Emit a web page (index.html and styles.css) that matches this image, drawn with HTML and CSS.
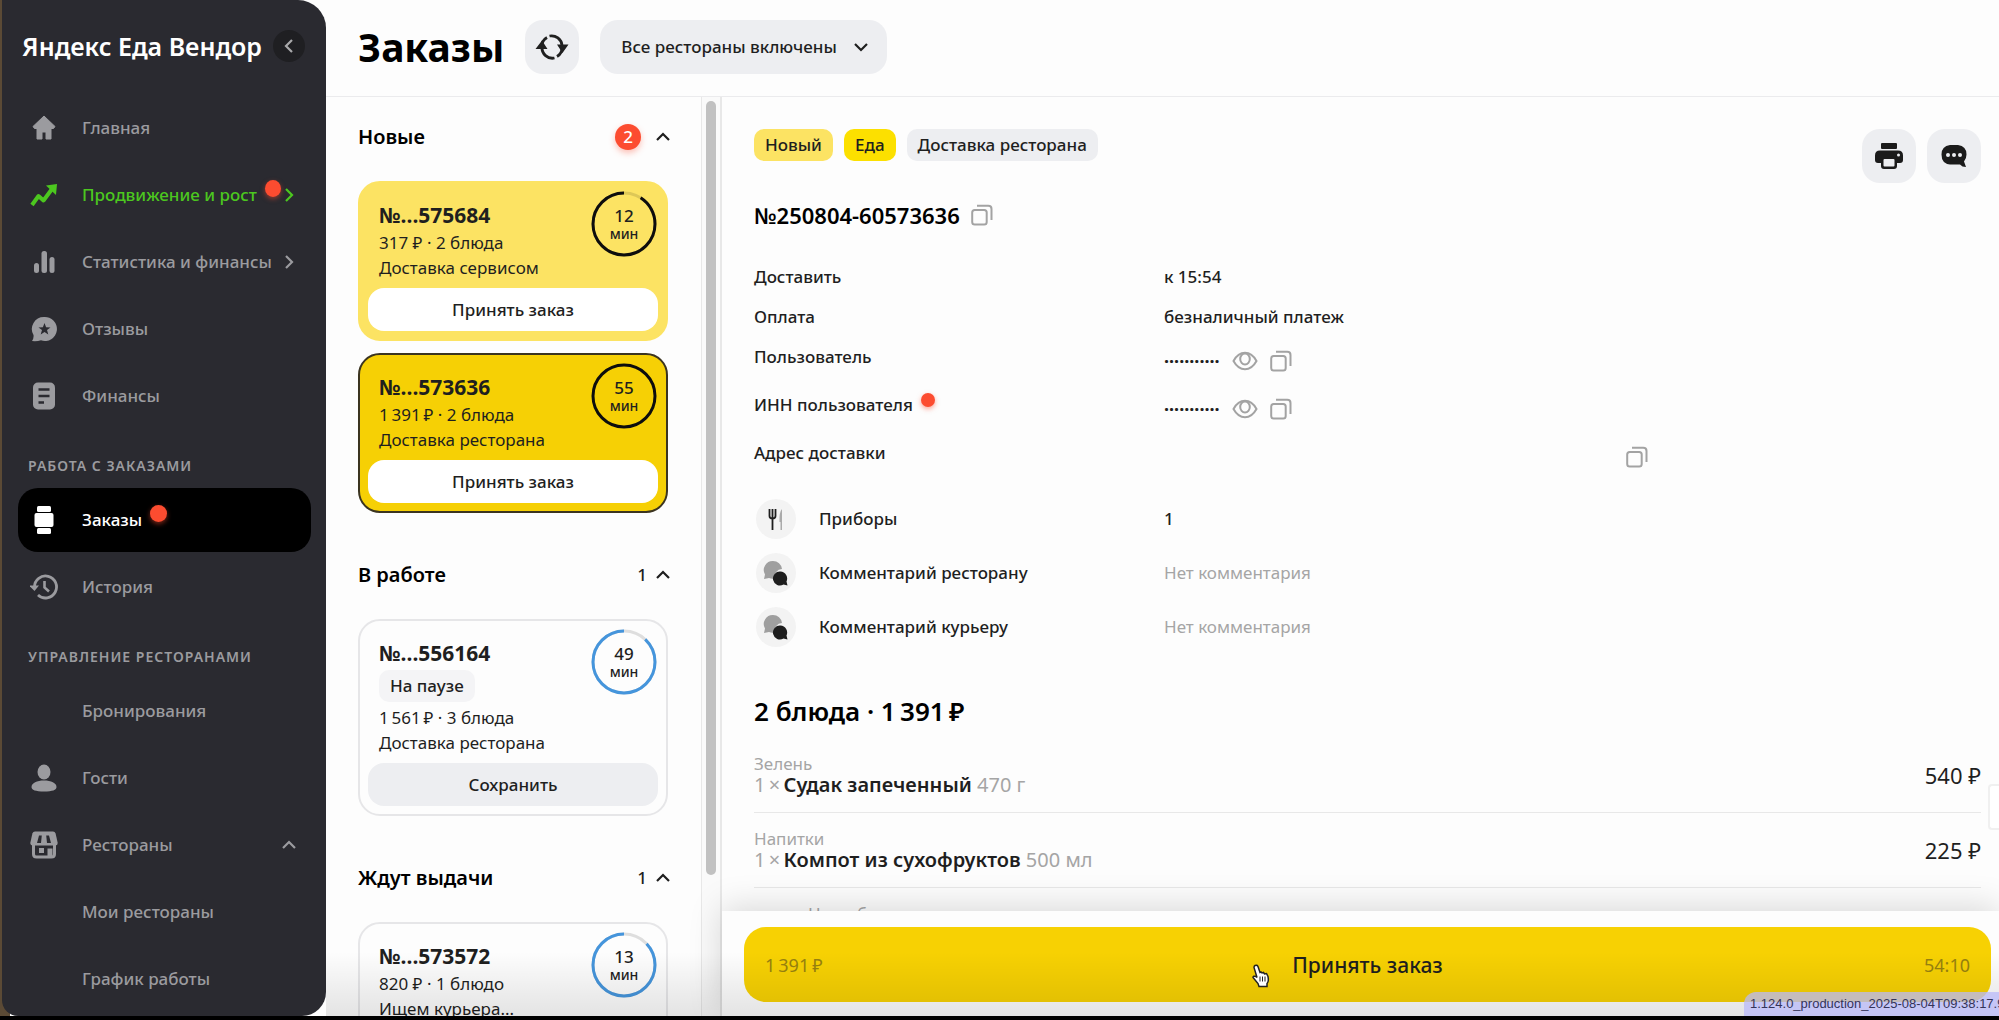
FILE: index.html
```html
<!DOCTYPE html>
<html lang="ru">
<head>
  <meta charset="UTF-8" />
  <meta name="viewport" content="width=device-width, initial-scale=1.0"/>
  <title>Заказы — Яндекс Еда Вендор</title>
  <link rel="stylesheet" href="styles.css">
</head>
<body>
  <!-- Общие иконки -->
  <svg class="sprite" aria-hidden="true">
    <symbol id="chevron" viewBox="0 0 16 16"><path d="M2 11l6-6 6 6" fill="none" stroke="currentColor" stroke-width="2.2"/></symbol>
    <symbol id="copy" viewBox="0 0 22 22"><rect x="1.2" y="6" width="14.5" height="14.5" rx="2.5" fill="none" stroke="currentColor" stroke-width="2"/><path d="M6 1.7h11.3q3.2 0 3.2 3.2V16" fill="none" stroke="currentColor" stroke-width="2"/></symbol>
    <symbol id="eye" viewBox="0 0 26 20"><path d="M1.5 10Q6 1.8 13 1.8T24.5 10Q20 18.2 13 18.2T1.5 10z" fill="none" stroke="currentColor" stroke-width="2"/><ellipse cx="13" cy="8" rx="4.8" ry="5.4" fill="none" stroke="currentColor" stroke-width="2"/></symbol>
    <symbol id="comments" viewBox="0 0 26 26"><path d="M10 1a9 9 0 0 0-8 13.5L1 19l5-1a9 9 0 0 0 6 .5A7.5 7.5 0 0 1 19 9 9 9 0 0 0 10 1z" fill="#9f9f9f"/><path d="M17.5 11.5a7 7 0 1 0 3 13l4 1-1-4a7 7 0 0 0-6-10z" fill="#1e1e1e"/></symbol>
  </svg>

  <div class="app">
    <aside class="sidebar">
      <div class="brand">
        <span class="brand-name">Яндекс Еда Вендор</span>
        <button class="collapse" aria-label="Свернуть меню"><svg class="chev chev-left"><use href="#chevron"/></svg></button>
      </div>

      <nav class="menu">
        <a class="menu-item" href="#">
          <svg class="menu-icon" viewBox="0 0 28 28"><path d="M14 2L3 12.5l1.5 2H7V25h5v-7h4v7h5V14.500h2.500l1.500-2z" fill="currentColor" stroke="currentColor" stroke-width="1" stroke-linejoin="round"/></svg>
          Главная
        </a>
        <a class="menu-item green" href="#">
          <svg class="menu-icon" viewBox="0 0 28 28"><path d="M2 24l6.500-9 5 4.500L22 8" fill="none" stroke="currentColor" stroke-width="4" stroke-linejoin="round"/><path d="M16 4.500L27 3l-1 11z" fill="currentColor"/></svg>
          Продвижение и рост
          <span class="dot"></span>
          <svg class="chev chev-right"><use href="#chevron"/></svg>
        </a>
        <a class="menu-item" href="#">
          <svg class="menu-icon" viewBox="0 0 28 28"><g fill="currentColor"><rect x="4" y="15" width="5" height="10" rx="2.500"/><rect x="11.500" y="3" width="5.500" height="22" rx="2.500"/><rect x="19.500" y="9" width="5" height="16" rx="2.500"/></g></svg>
          Статистика и финансы
          <svg class="chev chev-right"><use href="#chevron"/></svg>
        </a>
        <a class="menu-item" href="#">
          <svg class="menu-icon" viewBox="0 0 28 28"><path d="M14 2a12 12 0 1 1-3 23.300Q7 26.500 2 26q2-3 1.500-6A12 12 0 0 1 14 2z" fill="currentColor"/><path d="M14.500 8l1.600 4.200 4.400.2-3.500 2.700 1.300 4.300-3.800-2.500-3.800 2.500 1.300-4.300-3.500-2.700 4.400-.2z" fill="#2a2a30"/></svg>
          Отзывы
        </a>
        <a class="menu-item" href="#">
          <svg class="menu-icon" viewBox="0 0 28 28"><rect x="3" y="0.500" width="22" height="27" rx="5" fill="currentColor"/><path d="M8.500 7.500h11M8.500 14h11M8.500 20.500h5.500" stroke="#2a2a30" stroke-width="2.600"/></svg>
          Финансы
        </a>

        <h2 class="menu-title">Работа с заказами</h2>
        <a class="menu-item active" href="#">
          <svg class="menu-icon" viewBox="0 0 28 28"><g fill="currentColor"><rect x="7" y="0" width="14" height="6" rx="1.500"/><rect x="4.500" y="7" width="19" height="14" rx="2"/><rect x="7" y="22" width="14" height="6" rx="1.500"/></g></svg>
          Заказы
          <span class="dot"></span>
        </a>
        <a class="menu-item" href="#">
          <svg class="menu-icon" viewBox="0 0 28 28"><path d="M4.500 14A11 11 0 1 1 8 22" fill="none" stroke="currentColor" stroke-width="2.800"/><path d="M-1 12.500h10L4.500 18z" fill="currentColor"/><path d="M14.500 8v6.500l4.500 4" fill="none" stroke="currentColor" stroke-width="2.600"/></svg>
          История
        </a>

        <h2 class="menu-title">Управление ресторанами</h2>
        <a class="menu-item nested" href="#">Бронирования</a>
        <a class="menu-item" href="#">
          <svg class="menu-icon" viewBox="0 0 28 28"><g fill="currentColor"><ellipse cx="14" cy="8" rx="6.500" ry="7.500"/><path d="M14 16.500c7 0 12.500 2.500 12.500 6.500 0 3-4 4.500-12.500 4.500S1.500 26 1.500 23c0-4 5.500-6.500 12.500-6.500z"/></g></svg>
          Гости
        </a>
        <a class="menu-item" href="#">
          <svg class="menu-icon" viewBox="0 0 28 28"><path d="M5 .5h18q2 0 2.600 2l2 9q.4 3-2.600 3H3q-3 0-2.600-3l2-9Q3 .5 5 .5z" fill="currentColor"/><path d="M9 4.500h2.800l-.8 7.500H7zM16.200 4.500H19l2 7.500h-4z" fill="#2a2a30"/><path d="M3.500 14v9q0 3 3 3h15q3 0 3-3v-9" fill="none" stroke="currentColor" stroke-width="3"/><rect x="9" y="17" width="5" height="5" fill="currentColor"/><path d="M17.500 17.500h5V26h-5z" fill="currentColor"/></svg>
          Рестораны
          <svg class="chev"><use href="#chevron"/></svg>
        </a>
        <a class="menu-item nested" href="#">Мои рестораны</a>
        <a class="menu-item nested" href="#">График работы</a>
      </nav>
    </aside>

    <div class="page">
      <header class="topbar">
        <h1>Заказы</h1>
        <button class="icon-button" aria-label="Обновить">
          <svg width="34" height="28" viewBox="0 0 34 28"><path d="M7 15a10 10 0 0 1 5-10.500M14.500 3A10.500 10.500 0 0 1 27 12.500M27 14.500a10 10 0 0 1-5 9M19.500 25A10.500 10.500 0 0 1 7 14" fill="none" stroke="#202020" stroke-width="2.800"/><path d="M7 7.500l5.500 8.500h-12zM27.500 20L22 11.500h11.500z" fill="#202020"/></svg>
        </button>
        <div class="select-box">
          <select class="select" aria-label="Рестораны">
            <option>Все рестораны включены</option>
          </select>
          <svg class="chev chev-down"><use href="#chevron"/></svg>
        </div>
      </header>

      <div class="columns">
        <!-- Список заказов -->
        <section class="orders">
          <div class="group">
            <div class="group-head">
              <h2>Новые</h2>
              <span class="badge">2</span>
              <svg class="chev"><use href="#chevron"/></svg>
            </div>
            <article class="card new">
              <div class="card-body">
                <h3>№...575684</h3>
                <p>317 ₽ · 2 блюда</p>
                <p>Доставка сервисом</p>
                <div class="timer">
                  <svg class="ring" viewBox="0 0 66 66"><circle class="ring-bg" cx="33" cy="33" r="31"/><circle class="ring-fg" cx="33" cy="33" r="31" pathLength="100" stroke-dasharray="91 100" stroke-dashoffset="-9"/></svg>
                  <b>12</b><span>мин</span>
                </div>
              </div>
              <button class="card-button">Принять заказ</button>
            </article>
            <article class="card selected">
              <div class="card-body">
                <h3>№...573636</h3>
                <p>1&thinsp;391&thinsp;₽ · 2 блюда</p>
                <p>Доставка ресторана</p>
                <div class="timer">
                  <svg class="ring" viewBox="0 0 66 66"><circle class="ring-fg" cx="33" cy="33" r="31"/></svg>
                  <b>55</b><span>мин</span>
                </div>
              </div>
              <button class="card-button">Принять заказ</button>
            </article>
          </div>

          <div class="group">
            <div class="group-head">
              <h2>В работе</h2>
              <span class="count">1</span>
              <svg class="chev"><use href="#chevron"/></svg>
            </div>
            <article class="card work">
              <div class="card-body">
                <h3>№...556164</h3>
                <span class="pause">На паузе</span>
                <p>1&thinsp;561&thinsp;₽ · 3 блюда</p>
                <p>Доставка ресторана</p>
                <div class="timer">
                  <svg class="ring" viewBox="0 0 66 66"><circle class="ring-bg" cx="33" cy="33" r="31"/><circle class="ring-fg" cx="33" cy="33" r="31" pathLength="100" stroke-dasharray="88 100" stroke-dashoffset="-12"/></svg>
                  <b>49</b><span>мин</span>
                </div>
              </div>
              <button class="card-button">Сохранить</button>
            </article>
          </div>

          <div class="group">
            <div class="group-head">
              <h2>Ждут выдачи</h2>
              <span class="count">1</span>
              <svg class="chev"><use href="#chevron"/></svg>
            </div>
            <article class="card work">
              <div class="card-body">
                <h3>№...573572</h3>
                <p>820 ₽ · 1 блюдо</p>
                <p>Ищем курьера...</p>
                <div class="timer">
                  <svg class="ring" viewBox="0 0 66 66"><circle class="ring-bg" cx="33" cy="33" r="31"/><circle class="ring-fg" cx="33" cy="33" r="31" pathLength="100" stroke-dasharray="87 100" stroke-dashoffset="-13"/></svg>
                  <b>13</b><span>мин</span>
                </div>
              </div>
            </article>
          </div>
        </section>
        <div class="scrollbar"><div class="thumb"></div></div>

        <!-- Карточка выбранного заказа -->
        <main class="detail">
          <div class="detail-scroll">
            <div class="detail-top">
              <div class="tags">
                <span class="tag light">Новый</span>
                <span class="tag yellow">Еда</span>
                <span class="tag">Доставка ресторана</span>
              </div>
              <div class="actions">
                <button class="icon-button" aria-label="Печать">
                  <svg width="28" height="26" viewBox="0 0 28 26"><g fill="#1b1b1b"><rect x="6" y="0" width="16" height="6" rx="1"/><path d="M5 7.500h18q5 0 5 5V17q0 3-3 3h-3v3q0 3-3 3H9q-3 0-3-3v-3H3q-3 0-3-3v-4.500q0-5 5-5z"/></g><rect x="8.500" y="16" width="11" height="7.500" rx="1" fill="#edeef1"/><circle cx="23.500" cy="12" r="1.500" fill="#edeef1"/></svg>
                </button>
                <button class="icon-button" aria-label="Чат">
                  <svg width="26" height="24" viewBox="0 0 26 24"><path d="M9 1h8q8.500 1 8.500 9.500 0 4-2.500 7l2 5.500q-4 0-6-2.500H9Q.5 19.500.5 10.500.5 2 9 1z" fill="#1b1b1b"/><g fill="#edeef1"><circle cx="7" cy="11" r="2"/><circle cx="13" cy="11" r="2"/><circle cx="19" cy="11" r="2"/></g></svg>
                </button>
              </div>
            </div>

            <div class="number">
              <h2>№250804-60573636</h2>
              <button class="plain" aria-label="Копировать номер"><svg class="copy"><use href="#copy"/></svg></button>
            </div>

            <dl class="info">
              <div class="row"><dt>Доставить</dt><dd>к 15:54</dd></div>
              <div class="row"><dt>Оплата</dt><dd>безналичный платеж</dd></div>
              <div class="row">
                <dt>Пользователь</dt>
                <dd>
                  <span class="secret">···········</span>
                  <button class="plain" aria-label="Показать"><svg class="eye"><use href="#eye"/></svg></button>
                  <button class="plain" aria-label="Копировать"><svg class="copy"><use href="#copy"/></svg></button>
                </dd>
              </div>
              <div class="row tall">
                <dt>ИНН пользователя <span class="dot small"></span></dt>
                <dd>
                  <span class="secret">···········</span>
                  <button class="plain" aria-label="Показать"><svg class="eye"><use href="#eye"/></svg></button>
                  <button class="plain" aria-label="Копировать"><svg class="copy"><use href="#copy"/></svg></button>
                </dd>
              </div>
              <div class="row tall">
                <dt>Адрес доставки</dt>
                <dd class="address"><button class="plain" aria-label="Копировать адрес"><svg class="copy"><use href="#copy"/></svg></button></dd>
              </div>
            </dl>

            <dl class="notes">
              <div class="note">
                <dt><span class="round"><svg width="16" height="24" viewBox="0 0 16 24"><path d="M1.500 2v7q0 2.500 3 2.500t3-2.500V2M4.500 2v21" fill="none" stroke="#1e1e1e" stroke-width="1.800"/><path d="M14 2v21h-1.500v-8h-1Q11 5 14 2z" fill="#aaa"/></svg></span>Приборы</dt>
                <dd>1</dd>
              </div>
              <div class="note">
                <dt><span class="round"><svg width="26" height="26"><use href="#comments"/></svg></span>Комментарий ресторану</dt>
                <dd class="muted">Нет комментария</dd>
              </div>
              <div class="note">
                <dt><span class="round"><svg width="26" height="26"><use href="#comments"/></svg></span>Комментарий курьеру</dt>
                <dd class="muted">Нет комментария</dd>
              </div>
            </dl>

            <h2 class="total">2 блюда · 1&thinsp;391&thinsp;₽</h2>
            <ul class="dishes">
              <li class="dish">
                <div>
                  <div class="category">Зелень</div>
                  <div class="dish-name">1&thinsp;×&thinsp;<b>Судак запеченный</b> 470 г</div>
                </div>
                <span class="price">540 ₽</span>
              </li>
              <li class="dish">
                <div>
                  <div class="category">Напитки</div>
                  <div class="dish-name">1&thinsp;×&thinsp;<b>Компот из сухофруктов</b> 500 мл</div>
                </div>
                <span class="price">225 ₽</span>
              </li>
              <li class="dish option">
                <div class="category">На выбор</div>
              </li>
            </ul>
          </div>

          <footer class="accept-bar">
            <button class="accept">
              <span class="side">1&thinsp;391&thinsp;₽</span>
              <span class="accept-text">Принять заказ</span>
              <span class="side right">54:10</span>
            </button>
          </footer>
        </main>
      </div>

      <div class="shade"></div>
      <div class="widget"></div>
      <div class="version">1.124.0_production_2025-08-04T09:38:17.9</div>
    </div>
  </div>

  <!-- Курсор -->
  <svg class="cursor" viewBox="0 0 20 24"><path d="M5 2q2-1 3 1l2 6 1-.5 1 1 1.500-.5 1 1.500 2-.5 1.500 3q1 5-1 7v3h-8l-1-3-5-6q0-2 3-1l1 1L4 4q0-1.500 1-2z" fill="#fff" stroke="#222" stroke-width="1.500"/><path d="M10 13v5M12.500 13v5M15 13v5" stroke="#222"/></svg>
</body>
</html>
```
FILE: styles.css
```css
* { box-sizing: border-box; margin: 0; padding: 0; }

body {
  font-family: "Noto Sans", "Open Sans", sans-serif;
  font-size: 17px;
  font-weight: 500;
  line-height: 24px;
  color: #1f1f1f;
  background: #000;
  height: 100vh;
  overflow: hidden;
}

a { color: inherit; text-decoration: none; }
ul { list-style: none; }
button, select { font: inherit; color: inherit; border: none; cursor: pointer; }

.sprite {
  position: absolute;
  width: 0;
  height: 0;
}

.app {
  display: flex;
  height: calc(100vh - 4px);
  background: linear-gradient(90deg, #5b4a35 10px, #fdfdfd 10px);
}

/* Стрелки */
.chev { width: 16px; height: 16px; flex: none; }
.chev-left { transform: rotate(-90deg); }
.chev-right { transform: rotate(90deg); }
.chev-down { transform: rotate(180deg); }

/* Боковое меню */
.sidebar {
  width: 324px;
  flex: none;
  margin-left: 2px;
  padding: 14px 15px 0 16px;
  background: #2a2a30;
  color: #9b9b9f;
  border-radius: 0 28px 24px 16px;
  overflow: hidden;
}

.brand {
  display: flex;
  align-items: center;
  justify-content: space-between;
  height: 64px;
  padding: 0 6px 0 4px;
  margin-bottom: 18px;
}

.brand-name {
  font-size: 25px;
  font-weight: 600;
  color: #fff;
  white-space: nowrap;
}

.collapse {
  display: flex;
  align-items: center;
  justify-content: center;
  width: 32px;
  height: 32px;
  border-radius: 50%;
  background: #1f1f22;
  color: #a9a9ab;
}

.menu {
  display: flex;
  flex-direction: column;
  gap: 3px;
}

.menu-item {
  display: flex;
  align-items: center;
  height: 64px;
  padding: 0 14px 0 12px;
  border-radius: 20px;
  white-space: nowrap;
}

.menu-item .chev { margin-left: auto; }
.menu-icon { width: 28px; height: 28px; margin-right: 24px; flex: none; }
.nested { padding-left: 64px; }
.green { color: #4cc71f; }
.active { background: #000; color: #fff; }

.menu-title {
  height: 54px;
  padding: 23px 10px 0;
  font-size: 14px;
  font-weight: 600;
  letter-spacing: 1px;
  text-transform: uppercase;
}

.dot {
  width: 17px;
  height: 17px;
  margin: 0 0 14px 8px;
  border-radius: 50%;
  background: #fc4c30;
  box-shadow: 0 2px 5px rgba(252, 76, 48, 0.5);
}

.dot.small { width: 14px; height: 14px; margin-bottom: 12px; }

/* Шапка */
.page {
  position: relative;
  flex: 1;
  min-width: 0;
  display: flex;
  flex-direction: column;
}

.topbar {
  display: flex;
  align-items: center;
  gap: 21px;
  height: 97px;
  padding: 0 32px 3px;
  border-bottom: 1px solid #ebebed;
}

h1 {
  font-size: 39px;
  line-height: 48px;
  font-weight: 700;
  color: #000;
}

.icon-button {
  display: flex;
  align-items: center;
  justify-content: center;
  width: 54px;
  height: 54px;
  border-radius: 18px;
  background: #edeef1;
}

.select-box { position: relative; }

.select {
  appearance: none;
  height: 54px;
  padding: 0 50px 0 21px;
  border-radius: 18px;
  background: #edeef1;
}

.select-box .chev {
  position: absolute;
  right: 18px;
  top: 19px;
  pointer-events: none;
}

/* Список заказов */
.columns {
  display: flex;
  flex: 1;
  min-height: 0;
}

.orders {
  width: 375px;
  flex: none;
  padding: 18px 33px 0 32px;
  overflow: hidden;
}

.group { margin-bottom: 40px; }

.group-head {
  display: flex;
  align-items: center;
  height: 44px;
  margin-bottom: 22px;
}

.group-head h2 {
  flex: 1;
  font-size: 20px;
  font-weight: 600;
  color: #000;
}

.group-head .chev { margin-right: -3px; }
.count { margin-right: 8px; }

.badge {
  width: 26px;
  height: 26px;
  margin-right: 14px;
  border-radius: 50%;
  background: #fc4c30;
  box-shadow: 0 3px 6px rgba(252, 76, 48, 0.35);
  color: #fff;
  line-height: 26px;
  text-align: center;
}

.card {
  padding: 17px 8px 8px;
  border: 2px solid #e6e6e8;
  border-radius: 22px;
  margin-bottom: 12px;
}

.card.new { background: #fce363; border-color: #fce363; }
.card.selected { background: #f6d005; border-color: #3b3420; }

.card-body {
  position: relative;
  padding: 0 11px;
  margin-bottom: 8px;
}

.card h3 { font-size: 21px; line-height: 30px; font-weight: 700; }
.card p { line-height: 25px; font-weight: 400; }

.pause {
  display: table;
  margin: 2px 0 3px;
  padding: 4px 11px;
  border-radius: 10px;
  background: #f4f4f6;
}

.card-button {
  display: block;
  width: 100%;
  height: 43px;
  border-radius: 16px;
  background: #fff;
}

.work .card-button { background: #edeef1; }

.timer {
  position: absolute;
  top: -9px;
  right: 1px;
  width: 66px;
  height: 66px;
  padding-top: 15px;
  display: flex;
  flex-direction: column;
  align-items: center;
}

.timer b { font-size: 17px; font-weight: 500; line-height: 20px; }
.timer span { font-size: 14px; line-height: 16px; }

.ring {
  position: absolute;
  top: 0;
  left: 0;
  transform: rotate(-90deg);
}

.ring circle { fill: none; stroke-width: 3; }
.ring-bg { stroke: rgba(0, 0, 0, 0.12); }
.ring-fg { stroke: #0d0d0d; }
.work .ring-fg { stroke: #4595dc; }

.scrollbar {
  width: 21px;
  flex: none;
  padding: 4px;
  border-left: 1px solid #e8e8e8;
  border-right: 2px solid #e8e8e8;
  background: #fafafa;
}

.thumb {
  height: 85%;
  border-radius: 6px;
  background: #c1c1c1;
}

/* Детали заказа */
.detail {
  flex: 1;
  min-width: 0;
  display: flex;
  flex-direction: column;
}

.detail-scroll {
  flex: 1;
  min-height: 0;
  padding: 32px 18px 0 32px;
  overflow: hidden;
}

.detail-top { display: flex; justify-content: space-between; }
.tags, .actions { display: flex; gap: 11px; }

.tag {
  height: 32px;
  padding: 0 11px;
  border-radius: 10px;
  background: #edeef1;
  line-height: 32px;
}

.tag.light { background: #fce363; }
.tag.yellow { background: #fce000; }

.number {
  display: flex;
  align-items: center;
  gap: 11px;
  height: 28px;
  margin: 18px 0 36px;
}

.number h2 { font-size: 22px; font-weight: 600; color: #000; }

.plain {
  display: flex;
  background: none;
  color: #a3a3a3;
}

.copy { width: 22px; height: 22px; }
.eye { width: 26px; height: 20px; }

.row, .note { display: flex; }
.row { height: 40px; }
.row.tall { height: 48px; padding-top: 8px; }

dt { display: flex; width: 410px; }
dd { display: flex; }

.row dd { gap: 12px; height: 32px; }
.row dd .plain { align-items: center; }
.secret { font-size: 18px; font-weight: 700; line-height: 32px; }
.row dd.address { width: 484px; justify-content: flex-end; }

.notes { margin-top: 11px; }

.note { align-items: center; height: 54px; }
.note dt { align-items: center; }

.round {
  display: flex;
  align-items: center;
  justify-content: center;
  width: 40px;
  height: 40px;
  margin: 0 23px 0 2px;
  border-radius: 50%;
  background: #f3f3f3;
}

.muted { color: #a5a5a5; font-weight: 400; }

.total {
  margin-top: 39px;
  font-size: 26px;
  line-height: 36px;
  font-weight: 600;
  color: #000;
}

.dishes { margin-top: 9px; }

.dish {
  display: flex;
  align-items: center;
  justify-content: space-between;
  height: 75px;
  border-bottom: 1px solid #e8e8e8;
}

.dish.option { align-items: flex-start; padding: 16px 54px 0; }
.category { line-height: 20px; color: #a5a5a5; font-weight: 400; }
.dish-name { font-size: 20px; line-height: 22px; color: #a5a5a5; font-weight: 400; }
.dish-name b { color: #1f1f1f; font-weight: 600; }
.price { font-size: 22px; font-weight: 400; }

.accept-bar {
  padding: 16px 8px 14px 22px;
  background: #fdfdfd;
  box-shadow: 0 -4px 32px rgba(0, 0, 0, 0.15);
}

.accept {
  display: flex;
  align-items: center;
  width: 100%;
  height: 75px;
  padding: 0 21px;
  border-radius: 22px;
  background: #f7d103;
}

.accept-text { font-size: 21px; }
.side { flex: 1; text-align: left; font-size: 18px; font-weight: 400; color: #98820f; }
.side.right { text-align: right; }

/* Поверх страницы */
.shade {
  position: absolute;
  left: 0;
  right: 0;
  bottom: 0;
  height: 64px;
  background: linear-gradient(rgba(0, 0, 0, 0), rgba(0, 0, 0, 0.1));
  pointer-events: none;
}

.widget {
  position: absolute;
  right: 0;
  bottom: 186px;
  width: 11px;
  height: 46px;
  border: 2px solid #f0f0f0;
  border-right: none;
  border-radius: 4px 0 0 4px;
  background: #fff;
}

.version {
  position: absolute;
  right: 0;
  bottom: 0;
  width: 255px;
  padding: 0 6px;
  border-radius: 12px 0 0 0;
  background: rgba(186, 186, 250, 0.75);
  font-family: "Liberation Sans", Arial, sans-serif;
  font-size: 13px;
  font-weight: 400;
  color: #34345a;
  white-space: nowrap;
  overflow: hidden;
}

.cursor {
  position: absolute;
  left: 1250px;
  top: 963px;
  width: 20px;
  height: 25px;
}
```
